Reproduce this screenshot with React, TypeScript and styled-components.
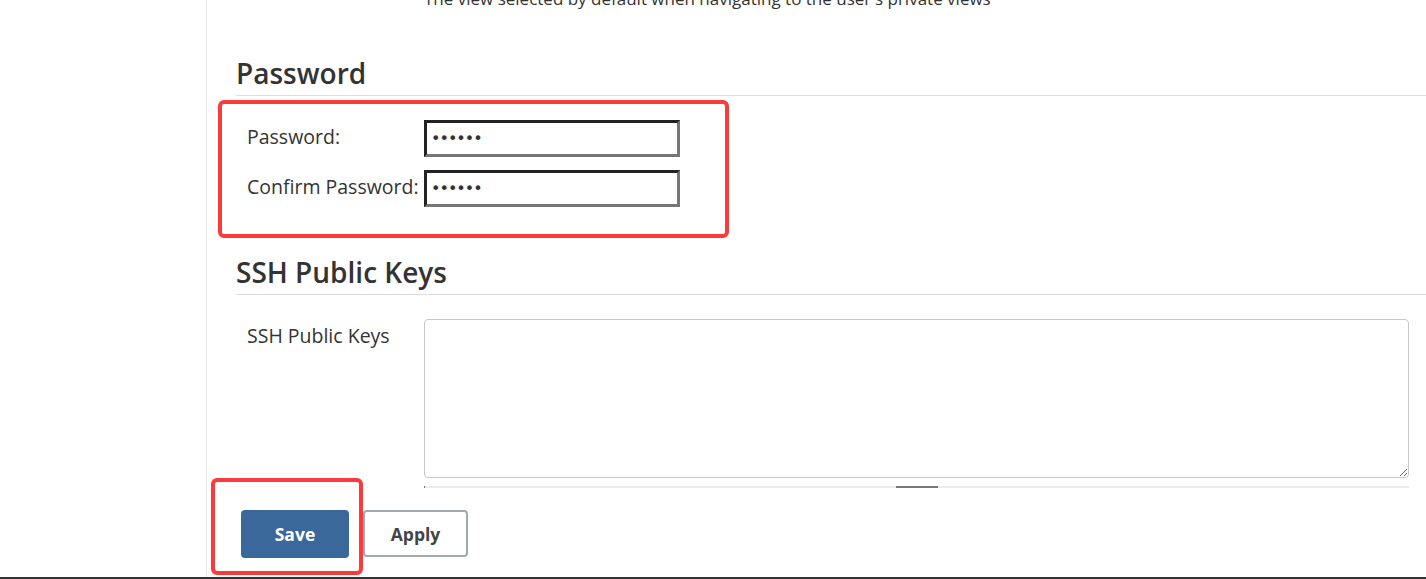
import { useState } from "react";
import styled, { createGlobalStyle } from "styled-components";

const GlobalStyle = createGlobalStyle`
  html, body {
    margin: 0;
    padding: 0;
    background: #fff;
    overflow: hidden;
  }
  body {
    font-family: "Open Sans", "Noto Sans", "Liberation Sans", sans-serif;
    color: #333;
  }
`;

const Page = styled.div`
  display: grid;
  grid-template-columns: 207px 1fr;
  height: 579px;
  box-sizing: border-box;
  border-bottom: 2px solid #333;
  overflow: hidden;
`;

const Sidebar = styled.aside`
  border-right: 1px solid #e6e6e6;
`;

const Main = styled.main`
  padding-left: 29px;
  display: flex;
  flex-direction: column;
`;

const Description = styled.div`
  margin-top: -11px;
  margin-left: 188px;
  font-size: 17px;
  line-height: 20px;
  color: #333;
  white-space: nowrap;
`;

const SectionTitle = styled.h2<{ $top: number }>`
  margin: ${(p) => p.$top}px 0 0;
  padding-bottom: 4px;
  font-size: 28px;
  line-height: 36px;
  font-weight: 600;
  color: #333;
  border-bottom: 1px solid #dedede;
`;

const RedFrame = styled.div`
  border: 4px solid #fd3a3a;
  border-radius: 6px;
`;

const PasswordFrame = styled(RedFrame)`
  margin: 4px 0 0 -18px;
  width: 511px;
  box-sizing: border-box;
  padding: 16px 0 27px 25px;
  display: flex;
  flex-direction: column;
  gap: 13px;
`;

const Row = styled.div<{ $align?: string }>`
  display: grid;
  grid-template-columns: 177px 1fr;
  align-items: ${(p) => p.$align ?? "center"};
`;

const Label = styled.label<{ $pad?: number }>`
  font-size: 19.5px;
  line-height: 24px;
  color: #333;
  padding-top: ${(p) => p.$pad ?? 0}px;
  margin-top: ${(p) => (p.$pad ? 0 : -3)}px;
  white-space: nowrap;
`;

const PasswordInput = styled.input`
  width: 256px;
  height: 37px;
  box-sizing: border-box;
  padding: 0 4px;
  border-style: solid;
  border-width: 3px;
  border-color: #222 #777 #777 #222;
  font-size: 16px;
  color: #333;
  font-family: "DejaVu Sans", sans-serif;
  letter-spacing: -1px;
  outline: none;
`;

const KeysRow = styled(Row)`
  margin-top: 24px;
  padding-left: 11px;
`;

const KeysBox = styled.div`
  display: flex;
  flex-direction: column;
  gap: 8px;
  margin-right: 17px;
`;

const TextArea = styled.textarea`
  height: 159px;
  box-sizing: border-box;
  border: 1px solid #c8c8c8;
  border-radius: 4px;
  resize: vertical;
  font-family: inherit;
  font-size: 15px;
`;

const ResizeBar = styled.div`
  height: 2px;
  background: #e9edf1;
  border-left: 1px solid #777;
  display: flex;
  justify-content: center;
`;

const BarHandle = styled.span`
  width: 42px;
  height: 2px;
  background: #777;
`;

const ButtonBar = styled.div`
  display: flex;
  align-items: flex-start;
  margin: -10px 0 0 -25px;
`;

const SaveFrame = styled(RedFrame)`
  padding: 28px 10px 13px 26px;
`;

const Button = styled.button<{ $primary?: boolean }>`
  height: 48px;
  box-sizing: border-box;
  border-radius: 4px;
  font-family: inherit;
  font-size: 17.5px;
  font-weight: 700;
  cursor: pointer;
  color: ${(p) => (p.$primary ? "#fff" : "#444")};
  background: ${(p) => (p.$primary ? "#3b689a" : "#fff")};
  border: ${(p) => (p.$primary ? "none" : "2px solid #a1a9b1")};
  width: ${(p) => (p.$primary ? 108 : 105)}px;
`;

const ApplyButton = styled(Button)`
  margin-top: 32px;
  height: 47px;
`;

export default function App() {
  const [password, setPassword] = useState("123456");
  const [confirm, setConfirm] = useState("123456");
  const [keys, setKeys] = useState("");

  return (
    <>
      <GlobalStyle />
      <Page>
        <Sidebar />
        <Main>
          <Description>
            The view selected by default when navigating to the user's private views
          </Description>

          <SectionTitle $top={46}>Password</SectionTitle>
          <PasswordFrame>
            <Row>
              <Label>Password:</Label>
              <PasswordInput
                type="password"
                value={password}
                onChange={(e) => setPassword(e.target.value)}
              />
            </Row>
            <Row>
              <Label>Confirm Password:</Label>
              <PasswordInput
                type="password"
                value={confirm}
                onChange={(e) => setConfirm(e.target.value)}
              />
            </Row>
          </PasswordFrame>

          <SectionTitle $top={16}>SSH Public Keys</SectionTitle>
          <KeysRow $align="start">
            <Label $pad={5}>SSH Public Keys</Label>
            <KeysBox>
              <TextArea value={keys} onChange={(e) => setKeys(e.target.value)} />
              <ResizeBar>
                <BarHandle />
              </ResizeBar>
            </KeysBox>
          </KeysRow>

          <ButtonBar>
            <SaveFrame>
              <Button $primary>Save</Button>
            </SaveFrame>
            <ApplyButton>Apply</ApplyButton>
          </ButtonBar>
        </Main>
      </Page>
    </>
  );
}
